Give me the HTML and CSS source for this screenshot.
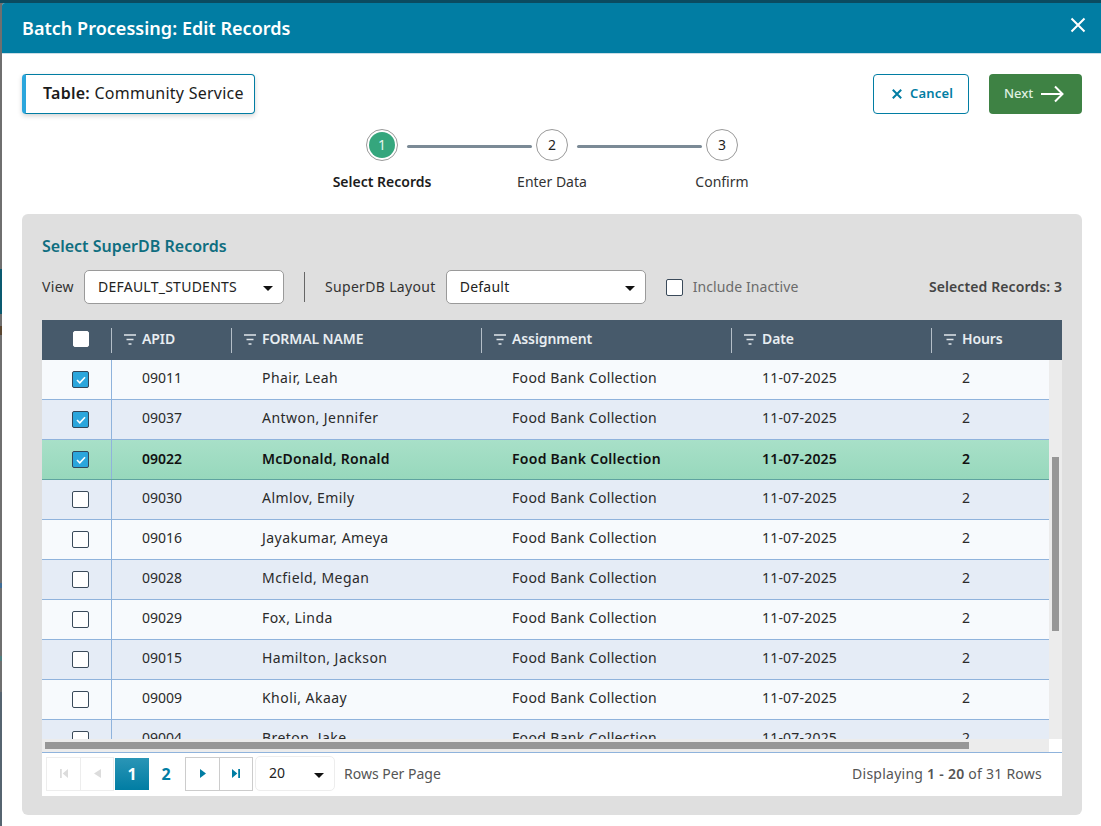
FILE: index.html
```html
<!DOCTYPE html>
<html lang="en">
<head>
<meta charset="utf-8">
<title>Batch Processing: Edit Records</title>
<link rel="stylesheet" href="styles.css">
</head>
<body>
<div class="modal">
  <header class="modal-head">
    <h1>Batch Processing: Edit Records</h1>
    <svg class="close" width="16" height="16" viewBox="0 0 16 16"><path d="M1.5 1.5l13 13M14.5 1.5l-13 13"/></svg>
  </header>
  <div class="modal-body">
    <div class="top-row">
      <div class="chip"><span class="chip-text"><b>Table:</b> Community Service</span></div>
      <div class="actions">
        <button class="btn cancel"><svg width="10" height="10" viewBox="0 0 10 10"><path d="M.8.8l8.400 8.400M9.200.8L.8 9.200"/></svg><span>Cancel</span></button>
        <button class="btn next"><span>Next</span><svg width="23" height="18" viewBox="0 0 23 18"><path d="M0 9h21.500M14 1.500l7.500 7.500-7.500 7.500"/></svg></button>
      </div>
    </div>
    <div class="stepper">
      <div class="dots">
        <span class="dot active"><i>1</i></span><span class="line"></span>
        <span class="dot"><i>2</i></span><span class="line"></span>
        <span class="dot"><i>3</i></span>
      </div>
      <div class="labels"><span class="on">Select Records</span><span>Enter Data</span><span>Confirm</span></div>
    </div>
    <section class="panel">
      <h2>Select SuperDB Records</h2>
      <div class="toolbar">
        <label class="lbl">View</label>
        <div class="select wide"><span>DEFAULT_STUDENTS</span><em class="caret"></em></div>
        <span class="vsep"></span>
        <label class="lbl">SuperDB Layout</label>
        <div class="select wide"><span>Default</span><em class="caret"></em></div>
        <span class="cb inactive-cb"></span>
        <span class="inactive">Include Inactive</span>
        <span class="selected">Selected Records: 3</span>
      </div>
      <div class="grid">
        <div class="thead">
          <div class="hc first"><span class="cb head-cb"></span></div>
          <div class="hc"><svg class="filt" width="12" height="11" viewBox="0 0 12 11"><path d="M0 1h12M2.500 5.500h7M4.500 10h3"/></svg><span>APID</span></div>
          <div class="hc"><svg class="filt" width="12" height="11" viewBox="0 0 12 11"><path d="M0 1h12M2.500 5.500h7M4.500 10h3"/></svg><span>FORMAL NAME</span></div>
          <div class="hc"><svg class="filt" width="12" height="11" viewBox="0 0 12 11"><path d="M0 1h12M2.500 5.500h7M4.500 10h3"/></svg><span>Assignment</span></div>
          <div class="hc"><svg class="filt" width="12" height="11" viewBox="0 0 12 11"><path d="M0 1h12M2.500 5.500h7M4.500 10h3"/></svg><span>Date</span></div>
          <div class="hc last"><svg class="filt" width="12" height="11" viewBox="0 0 12 11"><path d="M0 1h12M2.500 5.500h7M4.500 10h3"/></svg><span>Hours</span></div>
        </div>
        <div class="body-wrap">
          <div class="rows">
            <div class="row"><div class="c c0"><span class="cb on"><svg width="10" height="8" viewBox="0 0 10 8"><path d="M1 4l2.800 2.800L9 1.200"/></svg></span></div><div class="c">09011</div><div class="c">Phair, Leah</div><div class="c">Food Bank Collection</div><div class="c">11-07-2025</div><div class="c">2</div></div>
            <div class="row alt"><div class="c c0"><span class="cb on"><svg width="10" height="8" viewBox="0 0 10 8"><path d="M1 4l2.800 2.800L9 1.200"/></svg></span></div><div class="c">09037</div><div class="c">Antwon, Jennifer</div><div class="c">Food Bank Collection</div><div class="c">11-07-2025</div><div class="c">2</div></div>
            <div class="row hot"><div class="c c0"><span class="cb on"><svg width="10" height="8" viewBox="0 0 10 8"><path d="M1 4l2.800 2.800L9 1.200"/></svg></span></div><div class="c">09022</div><div class="c">McDonald, Ronald</div><div class="c">Food Bank Collection</div><div class="c">11-07-2025</div><div class="c">2</div></div>
            <div class="row alt"><div class="c c0"><span class="cb"></span></div><div class="c">09030</div><div class="c">Almlov, Emily</div><div class="c">Food Bank Collection</div><div class="c">11-07-2025</div><div class="c">2</div></div>
            <div class="row"><div class="c c0"><span class="cb"></span></div><div class="c">09016</div><div class="c">Jayakumar, Ameya</div><div class="c">Food Bank Collection</div><div class="c">11-07-2025</div><div class="c">2</div></div>
            <div class="row alt"><div class="c c0"><span class="cb"></span></div><div class="c">09028</div><div class="c">Mcfield, Megan</div><div class="c">Food Bank Collection</div><div class="c">11-07-2025</div><div class="c">2</div></div>
            <div class="row"><div class="c c0"><span class="cb"></span></div><div class="c">09029</div><div class="c">Fox, Linda</div><div class="c">Food Bank Collection</div><div class="c">11-07-2025</div><div class="c">2</div></div>
            <div class="row alt"><div class="c c0"><span class="cb"></span></div><div class="c">09015</div><div class="c">Hamilton, Jackson</div><div class="c">Food Bank Collection</div><div class="c">11-07-2025</div><div class="c">2</div></div>
            <div class="row"><div class="c c0"><span class="cb"></span></div><div class="c">09009</div><div class="c">Kholi, Akaay</div><div class="c">Food Bank Collection</div><div class="c">11-07-2025</div><div class="c">2</div></div>
            <div class="row alt"><div class="c c0"><span class="cb"></span></div><div class="c">09004</div><div class="c">Breton, Jake</div><div class="c">Food Bank Collection</div><div class="c">11-07-2025</div><div class="c">2</div></div>
          </div>
          <div class="vtrack"><div class="vthumb"></div></div>
        </div>
        <div class="hscroll"><div class="htrack"><div class="hthumb"></div></div></div>
        <div class="pager">
          <div class="pg-group muted">
            <span class="pg"><svg width="8" height="9" viewBox="0 0 9 10" preserveAspectRatio="none"><path d="M0 0h2v10H0zM9 0v10L3 5z"/></svg></span>
            <span class="pg"><svg width="7" height="9" viewBox="0 0 7 10" preserveAspectRatio="none"><path d="M7 0v10L0 5z"/></svg></span>
          </div>
          <span class="num cur">1</span><span class="num">2</span>
          <div class="pg-group live">
            <span class="pg"><svg width="6" height="9" viewBox="0 0 7 10" preserveAspectRatio="none"><path d="M0 0v10l7-5z"/></svg></span>
            <span class="pg"><svg width="8" height="9" viewBox="0 0 9 10" preserveAspectRatio="none"><path d="M0 0v10l6-5zM7 0h2v10H7z"/></svg></span>
          </div>
          <div class="select small"><span>20</span><em class="caret"></em></div>
          <span class="rpp">Rows Per Page</span>
          <span class="disp">Displaying <b>1 - 20</b> of 31 Rows</span>
        </div>
      </div>
    </section>
  </div>
</div>
</body>
</html>
```
FILE: styles.css
```css
* { box-sizing: border-box; }
html, body { margin: 0; height: 100%; }
body {
  width: 1101px; height: 826px; overflow: hidden;
  font-family: "Noto Sans", "Open Sans", sans-serif;
  font-size: 14px; color: #1f1f1f;
  background:
    linear-gradient(#0b4b60 0 3px, transparent 3px),
    linear-gradient(#6f6f6f 0 269px, #0a5a70 269px 314px, #6f6f6f 314px 326px, #5a4630 326px 335px, #6f6f6f 335px 583px, #3f6d96 583px 588px, #6f6f6f 588px 656px, #4f7f80 656px 661px, #6f6f6f 661px 692px, #566470 692px);
  position: relative;
}
.modal {
  position: absolute; left: 2px; top: 3px; width: 1099px; height: 823px;
  background: #fff; border-radius: 3px 0 0 0; overflow: hidden;
}
.modal-head {
  height: 51px; background: #017da3; border-bottom: 1px solid #c9dde6;
  display: flex; align-items: center; justify-content: space-between;
  padding: 0 15px 0 20px;
}
.modal-head h1 { margin: 0; font-size: 18px; font-weight: 600; color: #fff; letter-spacing: 0.03px; }
.close { margin-top: -6px; }
.close path { fill: none; stroke: #fff; stroke-width: 2; }
.modal-body { padding: 20px 19px 0 20px; }
.top-row { display: flex; justify-content: space-between; height: 40px; }
.chip {
  width: 233px; height: 40px; border: 1px solid #017da3; border-left: 4px solid #2ba6dc;
  border-radius: 4px; box-shadow: 0 2px 5px rgba(0,0,0,.18);
  padding: 0 0 2px 17px; display: flex; align-items: center;
  font-size: 16px; color: #1b1b1b; white-space: nowrap; letter-spacing: 0.25px;
}
.chip b { font-weight: 600; }
.actions { display: flex; gap: 20px; }
.btn { height: 40px; border-radius: 4px; font: 500 13px "Noto Sans", sans-serif; display: flex; align-items: center; padding: 0; }
.btn span { padding-bottom: 2px; letter-spacing: .2px; }
.cancel { width: 96px; background: #fff; border: 1px solid #017da3; color: #017da3; gap: 8px; font-weight: 600; padding-left: 18px; }
.cancel svg path { fill: none; stroke: #017da3; stroke-width: 2; }
.next { width: 93px; background: #3e8244; border: 0; color: #dff0e0; gap: 8px; padding-left: 15px; }
.next span { letter-spacing: 0; }
.next svg path { fill: none; stroke: #fff; stroke-width: 2; }
.stepper { margin-top: 15px; height: 85px; display: flex; flex-direction: column; align-items: center; }
.dots { display: flex; align-items: center; height: 32px; }
.dot { width: 32px; height: 32px; border-radius: 50%; border: 1px solid #9a9a9a; background: #fff; display: flex; align-items: center; justify-content: center; font-size: 14px; }
.dot i { font-style: normal; width: 26px; height: 26px; display: flex; align-items: center; justify-content: center; border-radius: 50%; padding-bottom: 1px; }
.dot.active i { background: #35a67d; color: #e6f5ef; }
.line { width: 125px; height: 3px; margin: 2px 4px 0 9px; background: #7b8a96; border-radius: 2px; }
.labels { display: flex; margin-top: 11px; line-height: 20px; }
.labels span { width: 170px; text-align: center; color: #333; }
.labels .on { font-weight: 600; color: #1c1c1c; }
.panel { width: 1060px; height: 601px; background: #dfdfdf; border-radius: 6px; padding: 20px 20px 0; }
.panel h2 { margin: 0; font-size: 16px; font-weight: 600; color: #0f6e80; line-height: 24px; }
.toolbar { display: flex; align-items: center; height: 34px; margin-top: 12px; }
.lbl { color: #333; margin-right: 10px; padding-bottom: 2px; letter-spacing: .33px; }
.select { position: relative; height: 34px; background: #fff; border: 1px solid #9a9a9a; border-radius: 5px; display: flex; align-items: center; padding: 0 0 2px 13px; color: #222; letter-spacing: .25px; }
.wide { width: 200px; }
.caret { position: absolute; right: 10px; top: 50%; margin-top: -1px; border: 5px solid transparent; border-top-color: #111; border-bottom: 0; }
.vsep { width: 1px; height: 30px; background: #666; margin: 0 20px; }
.cb { width: 17px; height: 17px; border: 1px solid #3a4a5a; border-radius: 2px; background: #fff; display: inline-flex; align-items: center; justify-content: center; }
.inactive-cb { margin-left: 20px; }
.inactive { margin-left: 10px; color: #6b6b6b; padding-bottom: 2px; letter-spacing: .1px; }
.selected { margin-left: auto; font-weight: 600; color: #444; padding-bottom: 2px; letter-spacing: .1px; }
.grid { margin-top: 16px; width: 1020px; }
.thead { height: 40px; background: #475a6b; display: grid; grid-template-columns: 70px 120px 250px 250px 200px 130px; color: #e8edf1; font-weight: 600; letter-spacing: -.1px; }
.hc { position: relative; display: flex; align-items: center; padding-left: 30px; }
.hc span { padding-bottom: 4px; }
.hc::after { content: ""; position: absolute; right: 0; top: 8px; bottom: 7px; width: 1px; background: #b4bec7; }
.hc.last::after { display: none; }
.hc.first { padding-left: 31px; }
.hc.first .head-cb { padding: 0; margin-top: -2px; }
.filt { position: absolute; left: 12px; top: 14px; }
.filt path { fill: none; stroke: #dfe5ea; stroke-width: 1.3; }
.head-cb { border-color: #fff; width: 16px; height: 16px; }
.body-wrap { display: flex; height: 379px; overflow: hidden; }
.rows { width: 1007px; flex: none; }
.row { height: 40px; display: grid; grid-template-columns: 70px 120px 250px 250px 200px 117px; align-items: center; background: #f7fafd; border-bottom: 1px solid #8fb3dc; }
.row.alt { background: #e5ecf6; }
.row.hot { background: linear-gradient(#a8e0c8, #97d8bc); border-bottom-color: #5fa3a0; font-weight: 600; color: #111; }
.c { padding: 0 0 4px 30px; white-space: nowrap; color: #2a2a2a; }
.c:nth-child(3) { letter-spacing: .45px; }
.c:nth-child(4) { letter-spacing: .35px; }
.c:nth-child(5) { letter-spacing: .2px; }
.hot .c { color: #111; padding-bottom: 2px; }
.hot .c:nth-child(3) { letter-spacing: .25px; }
.hot .c:nth-child(4) { letter-spacing: .28px; }
.c.c0, .hot .c.c0 { height: 39px; padding: 0 0 0 30px; border-right: 1px solid #8fb3dc; display: flex; align-items: center; }
.cb.on { background: #2ba6dc; border-color: #33475a; }
.cb.on svg path { fill: none; stroke: #fff; stroke-width: 1.6; }
.vtrack { width: 13px; background: #ececec; padding-top: 97px; padding-left: 3px; }
.vthumb { width: 7px; height: 174px; background: #979797; }
.hscroll { height: 13px; background: #fff; }
.htrack { width: 1007px; height: 13px; background: #ececec; padding: 3px 0 0 3px; }
.hthumb { width: 924px; height: 7px; background: #979797; }
.pager { height: 44px; background: #fff; border-top: 1px solid #8fb3dc; display: flex; align-items: center; padding: 0 20px 2px 4px; }
.pg-group { display: flex; height: 34px; border: 1px solid #ededed; }
.pg { width: 33px; display: flex; align-items: center; justify-content: center; }
.pg + .pg { border-left: 1px solid #ededed; }
.muted svg path { fill: #dcdcdc; }
.live { border-color: #ccc; margin-left: 2px; }
.live .pg + .pg { border-left-color: #ccc; }
.live svg path { fill: #017da3; }
.num { width: 34px; height: 32px; display: flex; align-items: center; justify-content: center; font-weight: 700; font-size: 16px; color: #017da3; }
.num.cur { margin-left: 1px; background: linear-gradient(#2a95b6, #017da3); color: #fff; }
.small { width: 80px; height: 35px; margin-left: 2px; border-color: #ededed; letter-spacing: 0; }
.rpp { margin-left: 9px; color: #555; padding-bottom: 1px; }
.disp { margin-left: auto; color: #555; padding-bottom: 1px; letter-spacing: .25px; }
.disp b { font-weight: 600; }
```
